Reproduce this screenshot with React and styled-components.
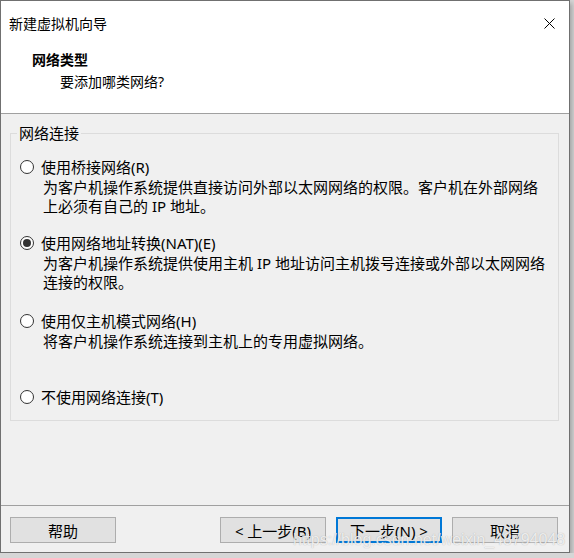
import React from "react";
import styled, { createGlobalStyle } from "styled-components";

const GlobalStyle = createGlobalStyle`
  html, body {
    margin: 0;
    padding: 0;
    background: #d6d6d6;
  }
  body {
    font-family: "Noto Sans", "Noto Sans CJK SC", sans-serif;
    color: #000;
  }
`;

const options = [
  {
    id: "bridge",
    label: "使用桥接网络",
    key: "(R)",
    desc: [
      "为客户机操作系统提供直接访问外部以太网网络的权限。客户机在外部网络",
      "上必须有自己的 IP 地址。",
    ],
  },
  {
    id: "nat",
    label: "使用网络地址转换(NAT)",
    key: "(E)",
    desc: [
      "为客户机操作系统提供使用主机 IP 地址访问主机拨号连接或外部以太网网络",
      "连接的权限。",
    ],
  },
  {
    id: "host",
    label: "使用仅主机模式网络",
    key: "(H)",
    desc: ["将客户机操作系统连接到主机上的专用虚拟网络。"],
  },
  {
    id: "none",
    label: "不使用网络连接",
    key: "(T)",
    desc: [],
  },
];

export default function App() {
  const [selected, setSelected] = React.useState("nat");

  return (
    <>
      <GlobalStyle />
      <Window>
        <TitleBar>
          <Title>新建虚拟机向导</Title>
          <CloseButton aria-label="关闭">
            <svg width="11" height="11" viewBox="0 0 11 11">
              <path d="M0.5 0.5 L10.5 10.5 M10.5 0.5 L0.5 10.5" stroke="#000" strokeWidth="1" fill="none" />
            </svg>
          </CloseButton>
        </TitleBar>

        <Header>
          <Heading>网络类型</Heading>
          <SubHeading>要添加哪类网络?</SubHeading>
        </Header>

        <Body>
          <GroupBox>
            <Legend>网络连接</Legend>
            <Options>
              {options.map((opt) => (
                <Option key={opt.id}>
                  <RadioRow onClick={() => setSelected(opt.id)}>
                    <Radio $checked={selected === opt.id} />
                    <RadioLabel>
                      {opt.label}
                      {opt.key}
                    </RadioLabel>
                  </RadioRow>
                  {opt.desc.length > 0 && (
                    <Desc>
                      {opt.desc.map((line, i) => (
                        <div key={i}>{line}</div>
                      ))}
                    </Desc>
                  )}
                </Option>
              ))}
            </Options>
          </GroupBox>
        </Body>

        <Footer>
          <Button>帮助</Button>
          <Spacer />
          <ButtonGroup>
            <Button>&lt; 上一步(B)</Button>
            <Button $primary>下一步(N) &gt;</Button>
            <Button>取消</Button>
          </ButtonGroup>
        </Footer>

        <Watermark>https://blog.csdn.net/weixin_48794048</Watermark>
      </Window>
    </>
  );
}

const Window = styled.div`
  position: relative;
  box-sizing: border-box;
  width: 570px;
  height: 553px;
  border: 1px solid #707070;
  background: #f0f0f0;
  display: flex;
  flex-direction: column;
  box-shadow: 2px 3px 5px rgba(0, 0, 0, 0.25);
  overflow: hidden;
`;

const TitleBar = styled.div`
  height: 44px;
  flex-shrink: 0;
  background: #fff;
  display: flex;
  align-items: center;
  justify-content: space-between;
  padding-left: 8px;
`;

const Title = styled.div`
  font-size: 14px;
  line-height: 20px;
  margin-top: 1px;
`;

const CloseButton = styled.div`
  width: 40px;
  height: 44px;
  display: flex;
  align-items: center;
  justify-content: center;
`;

const Header = styled.div`
  flex-shrink: 0;
  background: #fff;
  padding: 5px 0 21px 31px;
  border-bottom: 1px solid #a0a0a0;
`;

const Heading = styled.div`
  font-size: 14px;
  line-height: 20px;
  font-weight: bold;
`;

const SubHeading = styled.div`
  font-size: 14px;
  line-height: 20px;
  margin: 2px 0 0 28px;
`;

const Body = styled.div`
  flex: 1;
  padding: 9px 10px 0 9px;
`;

const GroupBox = styled.fieldset`
  margin: 0;
  padding: 14px 0 13px 9px;
  border: 1px solid #dcdcdc;
  min-width: 0;
`;

const Legend = styled.legend`
  font-size: 15px;
  line-height: 20px;
  padding: 0 2px;
  margin-left: -3px;
`;

const Options = styled.div`
  display: grid;
  grid-template-rows: 76px 78px 76px 20px;
`;

const Option = styled.div`
  display: flex;
  flex-direction: column;
`;

const RadioRow = styled.label`
  display: flex;
  align-items: center;
  height: 20px;
  cursor: default;
`;

const Radio = styled.span`
  box-sizing: border-box;
  width: 14px;
  height: 14px;
  border-radius: 50%;
  border: 1px solid #333;
  background: #fff;
  display: flex;
  align-items: center;
  justify-content: center;
  margin-right: 7px;
  flex-shrink: 0;

  &::after {
    content: "";
    width: 8px;
    height: 8px;
    border-radius: 50%;
    background: #333;
    display: ${(p) => (p.$checked ? "block" : "none")};
  }
`;

const RadioLabel = styled.span`
  font-size: 15px;
  line-height: 20px;
  white-space: nowrap;
`;

const Desc = styled.div`
  margin: 1px 0 0 23px;
  font-size: 15px;
  line-height: 19px;
  white-space: nowrap;
`;

const Footer = styled.div`
  flex-shrink: 0;
  display: flex;
  align-items: flex-start;
  border-top: 1px solid #a0a0a0;
  padding: 11px 11px 9px 9px;
`;

const Spacer = styled.div`
  flex: 1;
`;

const ButtonGroup = styled.div`
  display: flex;
  gap: 10px;
`;

const Button = styled.div`
  box-sizing: border-box;
  width: 106px;
  height: 26px;
  background: #e1e1e1;
  border: ${(p) => (p.$primary ? "2px solid #0078d7" : "1px solid #adadad")};
  display: flex;
  align-items: center;
  justify-content: center;
  font-size: 15px;
  white-space: nowrap;
`;

const Watermark = styled.div`
  position: absolute;
  left: 292px;
  top: 529px;
  font-family: "Liberation Sans", Arial, sans-serif;
  font-size: 16px;
  line-height: 20px;
  color: rgba(255, 255, 255, 0.8);
  text-shadow: 0 0 1px rgba(120, 120, 120, 0.6);
  pointer-events: none;
  white-space: nowrap;
`;
